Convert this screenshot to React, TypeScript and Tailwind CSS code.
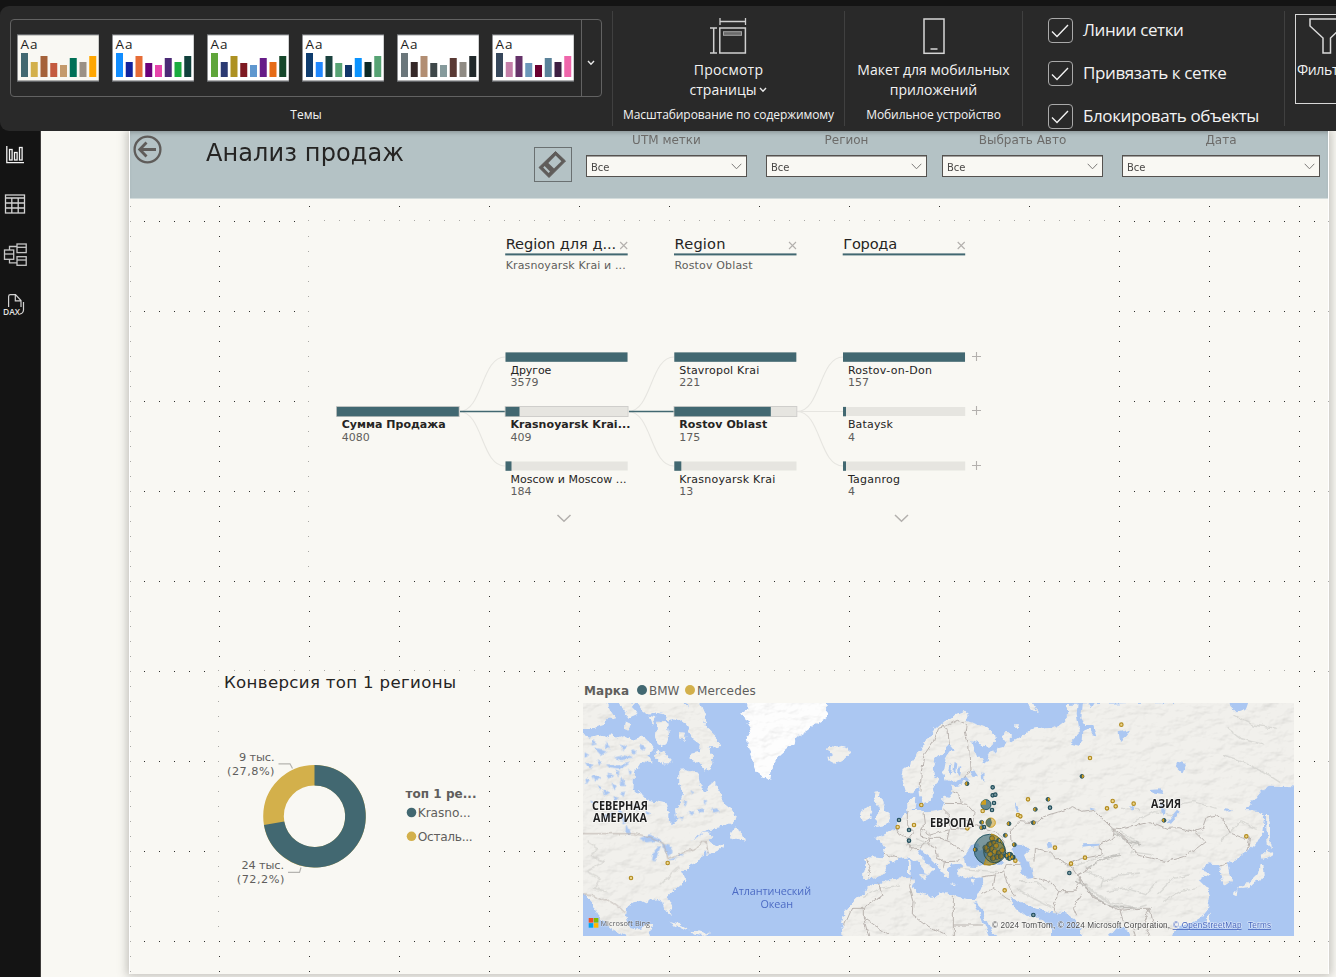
import React from "react";

const THEMES: { bg: string; bars: string[] }[] = [
  { bg: "#f9f8f3", bars: ["#426871", "#d3b04b", "#a5623a", "#c45a3f", "#c49a6c", "#007056", "#9b9186", "#ffa600"] },
  { bg: "#ffffff", bars: ["#118dff", "#12239e", "#e66c37", "#6b007b", "#e645ab", "#4b2a76", "#1aab40", "#11413c"] },
  { bg: "#ffffff", bars: ["#5fa53a", "#2b3a73", "#ad9122", "#7e1a22", "#5f97cf", "#661c88", "#e66c17", "#15472a"] },
  { bg: "#ffffff", bars: ["#0f3c6e", "#1f87ff", "#1a423e", "#57a374", "#103569", "#0a93ff", "#0b2926", "#57a374"] },
  { bg: "#ffffff", bars: ["#6b777b", "#352929", "#b28e73", "#3f484a", "#859a9c", "#593934", "#8f8b84", "#20282a"] },
  { bg: "#ffffff", bars: ["#36475b", "#c47fa9", "#653269", "#6b97ba", "#6b0030", "#5a829a", "#3d1f42", "#ef66ab"] },
];
const BAR_H = [24, 15, 21, 14, 12, 19, 15, 21];

function ThemeThumb({ t }: { t: (typeof THEMES)[number] }) {
  return (
    <svg width="82" height="48" viewBox="0 0 82 48">
      <rect x="0" y="0" width="82" height="48" fill="#626467" />
      <rect x="0.7" y="1.3" width="81" height="45.2" fill={t.bg} />
      <text x="3.5" y="15" fontSize="13.5" fill="#1d1d1d" fontFamily="Open Sans, sans-serif" textLength="17">Aa</text>
      {t.bars.map((c, i) => (
        <rect key={i} x={4 + i * 9.75} y={43 - BAR_H[i]} width="7" height={BAR_H[i]} fill={c} />
      ))}
    </svg>
  );
}

const RIBBON = "font-['Open_Sans','Noto_Sans',sans-serif]";

function Check({ label }: { label: string }) {
  return (
    <div className="flex h-[25px] items-center gap-[10px]">
      <svg width="25" height="25" viewBox="0 0 25 25" fill="none">
        <rect x="0.5" y="0.5" width="24" height="24" rx="3.5" stroke="#a9a9a9" />
        <path d="M4 13.5 L9 18.5 L20 7" stroke="#f1f1f1" strokeWidth="1.4" />
      </svg>
      <span className="mb-[2px] whitespace-nowrap text-[17px] leading-[23px] tracking-[-0.4px]">{label}</span>
    </div>
  );
}

function Ribbon() {
  return (
    <header className={`flex h-[125px] shrink-0 overflow-hidden rounded-l-[9px] bg-[#292929] text-[#f3f3f3] ${RIBBON}`}>
      <div className="flex w-[612px] shrink-0 flex-col items-center pt-[13px]">
        <div className="flex h-[78px] w-[592px] rounded-[4px] border border-[#626262]">
          <div className="flex flex-1 gap-[13px] pl-[6px] pt-[14px]">
            {THEMES.map((t, i) => (
              <ThemeThumb key={i} t={t} />
            ))}
          </div>
          <div className="flex w-[20px] items-center justify-center border-l border-[#626262] pr-px pt-[10px]">
            <svg width="8" height="6" viewBox="0 0 8 6" fill="none">
              <path d="M1 1 L4 4.2 L7 1" stroke="#e8e8e8" strokeWidth="1.4" />
            </svg>
          </div>
        </div>
        <span className="mt-[10px] text-[12px] leading-[16px]">Темы</span>
      </div>

      <div className="my-[5px] flex w-[232px] shrink-0 flex-col items-center border-l border-[#404040] pt-[7px]">
        <svg width="37" height="37" viewBox="0 0 37 37" fill="none" stroke="#d0d0d0">
          <path d="M10 0 V7 M35.5 0 V7 M10 3.5 H35.5" strokeWidth="1.3" />
          <path d="M0 10 H7 M0 35 H7 M3.7 10 V35" strokeWidth="1.5" />
          <rect x="9.8" y="10" width="25.6" height="25" strokeWidth="1.5" />
          <rect x="13.5" y="13.7" width="18" height="3.6" stroke="#a4a4a4" fill="#6a6a6a" />
        </svg>
        <div className="mt-[5px] text-center text-[14px] leading-[20px]">
          <div className="tracking-[0.2px]">Просмотр</div>
          <div className="flex items-center gap-[3px]">
            страницы
            <svg width="8" height="6" viewBox="0 0 8 6" fill="none">
              <path d="M1 1 L4 4.2 L7 1" stroke="#e8e8e8" strokeWidth="1.4" />
            </svg>
          </div>
        </div>
        <span className="mt-[7px] whitespace-nowrap text-[12px] leading-[16px] tracking-[-0.07px]">Масштабирование по содержимому</span>
      </div>

      <div className="my-[5px] flex w-[178px] shrink-0 flex-col items-center border-l border-[#404040] pt-[7px]">
        <svg width="22" height="37" viewBox="0 0 22 37" fill="none" stroke="#d6d6d6" strokeWidth="1.5">
          <rect x="1" y="1" width="20" height="34.3" />
          <path d="M7.5 31 H14.5" />
        </svg>
        <div className="mt-[5px] whitespace-nowrap text-center text-[14px] leading-[20px]">
          Макет для мобильных
          <br />
          приложений
        </div>
        <span className="mt-[7px] whitespace-nowrap text-[12px] leading-[16px] tracking-[-0.1px]">Мобильное устройство</span>
      </div>

      <div className="my-[5px] flex w-[262px] shrink-0 flex-col gap-[18px] border-l border-[#404040] pl-[25px] pt-[7px]">
        <Check label="Линии сетки" />
        <Check label="Привязать к сетке" />
        <Check label="Блокировать объекты" />
      </div>

      <div className="my-[5px] flex w-[52px] shrink-0 overflow-hidden border-l border-[#404040] pl-[10px] pt-[3px]">
        <div className="h-[90px] w-[70px] shrink-0 border border-[#d8d8d8] pl-px">
          <svg className="ml-[12px] mt-[3px]" width="36" height="36" viewBox="0 0 36 36" fill="none" stroke="#dadada" strokeWidth="1.5">
            <path d="M1 1 H34 V8 L21.5 20 V35 H14 V20 L1 8 Z" />
          </svg>
          <div className="mt-[8px] whitespace-nowrap text-[14px] leading-[16px] tracking-[-0.35px]">Фильтры</div>
        </div>
      </div>
    </header>
  );
}

function Sidebar() {
  return (
    <nav className="flex w-[41px] shrink-0 flex-col gap-[22px] border-r border-[#3f3d3b] bg-[#141414] pl-[2px] pt-[10px]">
      <svg width="28" height="28" viewBox="3 141 28 28" fill="none" stroke="#f4f4f4" strokeWidth="1.3">
        <path d="M7.8 146 V162.6 H25" />
        <rect x="10.5" y="149.5" width="2.6" height="10.5" />
        <rect x="15.5" y="152.5" width="2.6" height="7.5" />
        <rect x="20.5" y="147.5" width="2.6" height="12.5" />
      </svg>
      <svg width="28" height="28" viewBox="3 191 28 28" fill="none" stroke="#d2d2d2" strokeWidth="1.3">
        <rect x="6.5" y="195" width="19" height="18" />
        <path d="M6.5 198 H25.5 M6.5 203 H25.5 M6.5 208 H25.5 M12.8 198 V213 M19.2 198 V213" />
      </svg>
      <svg width="28" height="28" viewBox="3 241 28 28" fill="none" stroke="#c6c6c6" strokeWidth="1.3">
        <rect x="5.5" y="250" width="9.2" height="9.3" />
        <path d="M5.5 254 H14.7" />
        <rect x="18" y="244" width="9.2" height="8.6" />
        <path d="M18 247.3 H27.2" />
        <rect x="18" y="256.7" width="9.2" height="8.6" />
        <path d="M18 260 H27.2" />
        <path d="M10.5 250 V246.5 H18 M10.5 259.3 V262.8 H18" />
      </svg>
      <svg width="28" height="28" viewBox="3 291 28 28" fill="none" stroke="#d2d2d2" strokeWidth="1.2">
        <path d="M9.6 307 V296.5 Q9.6 294.7 11.4 294.7 H16.5 L22 300.5 V307 M16.3 295 V300.8 H22 M24.5 302 V310 Q24.2 313.5 21 314" />
        <text x="4" y="314.5" fontSize="8.5" stroke="none" fill="#e2e2e2" fontWeight="600" fontFamily="Open Sans, sans-serif" textLength="17" lengthAdjust="spacingAndGlyphs">DAX</text>
      </svg>
    </nav>
  );
}

const VISUALS = [
  { x1: 309, y1: 221, x2: 1119, y2: 581 },
  { x1: 219, y1: 671, x2: 489, y2: 941 },
  { x1: 579, y1: 671, x2: 1299, y2: 941 },
];

function GridDots() {
  const dots: React.ReactNode[] = [];
  for (let y = 206; y < 974; y += 15) {
    for (let x = 129; x <= 1329; x += 15) {
      if ((x - 129) % 90 !== 0 && (y - 221) % 90 !== 0) continue;
      if (VISUALS.some((v) => x > v.x1 && x < v.x2 && y > v.y1 && y < v.y2)) continue;
      const left = VISUALS.some((v) => x === v.x1 && y >= v.y1 && y < v.y2);
      const top = VISUALS.some((v) => y === v.y1 && x >= v.x1 && x < v.x2);
      const side = x === 129 || x === 1329;
      dots.push(
        <rect
          key={`${x}-${y}`}
          x={x === 129 ? 130 : x === 1329 ? 1328 : left ? x - 1 : x}
          y={top ? y - 1 : y}
          width="1"
          height="1"
          fill={left || top || side ? "#aaa9a5" : "#2e2e2c"}
        />
      );
    }
  }
  return (
    <svg className="absolute -left-px top-0" width="1200" height="843" viewBox="129 131 1200 843" shapeRendering="crispEdges">
      {dots}
    </svg>
  );
}

function Slicer({ label, box }: { label: string; box: string }) {
  return (
    <div className={`flex shrink-0 flex-col items-center pt-px ${box}`}>
      <div className="whitespace-nowrap text-[12px] leading-[16px] text-[#6c6b69]">{label}</div>
      <div className="mt-[7px] flex h-[22px] w-full items-center justify-between border border-[#55524f] bg-[#f9f8f3] pl-[4px] pr-[4px] shadow-[inset_0_1px_0_#a3a19e]">
        <span className="pt-[3px] text-[10px] leading-[14px] tracking-[-0.1px] text-[#4a4846]">Все</span>
        <svg width="11" height="7" viewBox="0 0 11 7" fill="none">
          <path d="M0.7 0.8 L5.5 5.8 L10.3 0.8" stroke="#7d7b78" strokeWidth="1" />
        </svg>
      </div>
    </div>
  );
}

function PageHeader() {
  return (
    <div className="relative ml-px flex h-[68px] w-[1198px] border-b border-[#d3dcdc] bg-[#b4c2c5] shadow-[inset_0_4px_5px_-3px_rgba(0,0,0,0.28)]">
      <svg className="ml-[3px] mt-[4px] shrink-0" width="29" height="29" viewBox="0 0 29 29" fill="none" stroke="#5f5c5a">
        <circle cx="14.5" cy="14.5" r="12.9" strokeWidth="2.3" />
        <path d="M23 14.5 H7 M13.5 7.5 L6.7 14.5 L13.5 21.5" strokeWidth="2.8" />
      </svg>
      <h1 className="ml-[44px] mt-[7px] w-[328px] shrink-0 whitespace-nowrap text-[24px] leading-[30px] tracking-[0.1px] text-[#252423]">Анализ продаж</h1>
      <div className="mt-[16px] flex h-[35px] w-[38px] shrink-0 items-center justify-center border border-[#6a7071]">
        <svg className="-mt-px mr-[3px]" width="30" height="30" viewBox="0 0 30 30">
          <path d="M18.5 2.5 L28.5 12 L12 28.5 L2 18.5 Z" fill="#5f5c5a" stroke="#5f5c5a" strokeWidth="1" strokeLinejoin="round" />
          <path d="M18.6 6.6 L24.4 12.2 L17 19.6 L11.3 13.9 Z" fill="#b4c2c5" />
          <path d="M7.6 16.9 L13 22.4 L11.6 24 L6.2 18.5 Z" fill="#b4c2c5" />
        </svg>
      </div>
      <Slicer label="UTM метки" box="ml-[14px] w-[161px]" />
      <Slicer label="Регион" box="ml-[19px] w-[161px]" />
      <Slicer label="Выбрать Авто" box="ml-[15px] w-[161px]" />
      <Slicer label="Дата" box="ml-[19px] w-[198px]" />
    </div>
  );
}

type TreeNode = { x: number; y: number; name: string; w: number; v: string; fill: number; bold?: boolean; vw: number };
const NODES: TreeNode[] = [
  { x: 337, y: 411.5, name: "Сумма Продажа", w: 104, v: "4080", vw: 28, fill: 122, bold: true },
  { x: 505.7, y: 357, name: "Другое", w: 41, v: "3579", vw: 28, fill: 122 },
  { x: 505.7, y: 411.5, name: "Krasnoyarsk Krai...", w: 120, v: "409", vw: 21, fill: 14, bold: true },
  { x: 505.7, y: 466, name: "Moscow и Moscow ...", w: 116, v: "184", vw: 21, fill: 6 },
  { x: 674.5, y: 357, name: "Stavropol Krai", w: 80, v: "221", vw: 21, fill: 122 },
  { x: 674.5, y: 411.5, name: "Rostov Oblast", w: 88, v: "175", vw: 21, fill: 96.5, bold: true },
  { x: 674.5, y: 466, name: "Krasnoyarsk Krai", w: 96, v: "13", vw: 14, fill: 7 },
  { x: 843.2, y: 357, name: "Rostov-on-Don", w: 84, v: "157", vw: 21, fill: 122 },
  { x: 843.2, y: 411.5, name: "Bataysk", w: 45, v: "4", vw: 7, fill: 3 },
  { x: 843.2, y: 466, name: "Taganrog", w: 52, v: "4", vw: 7, fill: 3 },
];

function DecompositionTree() {
  const heads = [
    { x: 505.7, t: "Region для д...", w: 110.5, s: "Krasnoyarsk Krai и ...", sw: 120 },
    { x: 674.5, t: "Region", w: 51, s: "Rostov Oblast", sw: 78 },
    { x: 843.2, t: "Города", w: 54, s: "", sw: 0 },
  ];
  return (
    <svg className="ml-[180px] mt-[23px] block" width="810" height="359" viewBox="309 222 810 359" fontFamily="DejaVu Sans, Verdana, sans-serif">
      {heads.map((h) => (
        <g key={h.x}>
          <text x={h.x} y="249" fontSize="14.6" fill="#252423" textLength={h.w}>{h.t}</text>
          <path d={`M${h.x + 114.5} 242 l7 7 m0 -7 l-7 7`} stroke="#b3b0ad" strokeWidth="1.1" />
          <rect x={h.x - 0.5} y="253.4" width="122.5" height="2" fill="#426871" />
          {h.s && (
            <text x={h.x} y="269" fontSize="11" fill="#605e5c" textLength={h.sw}>{h.s}</text>
          )}
        </g>
      ))}
      <g fill="none" stroke="#e6e5e0" strokeWidth="1.1">
        {[459, 628, 797].map((x) => (
          <g key={x}>
            <path d={`M${x} 411.5 C${x + 24} 411.5 ${x + 22} 357 ${x + 46} 357`} />
            <path d={`M${x} 411.5 C${x + 24} 411.5 ${x + 22} 466 ${x + 46} 466`} />
            <path d={`M${x} 411.5 H${x + 46}`} />
          </g>
        ))}
      </g>
      <path d="M460 411.5 H506 M629 411.5 H675" stroke="#426871" strokeWidth="1.4" />
      {NODES.map((n, i) => (
        <g key={i}>
          <rect x={n.x} y={n.y - 4.5} width="122" height="9" fill="#e6e5e0" />
          {n.bold && <rect x={n.x - 0.5} y={n.y - 5} width="122.8" height="10" fill="none" stroke="#cfcecb" />}
          <rect x={n.x - 0.2} y={n.y - 4.6} width={n.fill} height="9.4" fill="#426871" />
          <text x={n.x + 4.7} y={n.y + 16.7} fontSize="11" fontWeight={n.bold ? 700 : 400} fill="#252423" textLength={n.w}>{n.name}</text>
          <text x={n.x + 4.7} y={n.y + 29.2} fontSize="11" fill="#605e5c" textLength={n.vw}>{n.v}</text>
        </g>
      ))}
      {[356.5, 410.5, 465.5].map((y) => (
        <path key={y} d={`M972 ${y} h9 m-4.5 -4.5 v9`} stroke="#b3b0ad" strokeWidth="1.1" />
      ))}
      <path d="M557.5 515 L564 521.3 L570.5 515 M895 515 L901.5 521.3 L908 515" fill="none" stroke="#b3b0ad" strokeWidth="1.5" />
    </svg>
  );
}

function DonutVisual() {
  return (
    <section className="w-[270px] shrink-0">
      <svg className="block" width="270" height="270" viewBox="219 671 270 270" fontFamily="DejaVu Sans, Verdana, sans-serif">
        <text x="224" y="687.5" fontSize="16.6" fill="#252423" textLength="232">Конверсия топ 1 регионы</text>
        <circle cx="314.5" cy="816.2" r="41" fill="none" stroke="#d3b04b" strokeWidth="20.6" />
        <path d="M314.5 775.2 A41 41 0 1 1 274.1 823.3" fill="none" stroke="#426871" strokeWidth="20.6" />
        <path d="M278.5 763.8 H290 L292.5 768.5 M288 872.4 H299.5 L301 867.5" fill="none" stroke="#b5b4b0" strokeWidth="1.2" />
        <g fontSize="11.3" fill="#605e5c" textAnchor="end">
          <text x="274.5" y="761" textLength="35.5">9 тыс.</text>
          <text x="274.5" y="775" textLength="47.5">(27,8%)</text>
          <text x="284" y="869" textLength="42.5">24 тыс.</text>
          <text x="284.3" y="883" textLength="47.5">(72,2%)</text>
        </g>
        <text x="405.5" y="797.8" fontSize="12" fontWeight="700" fill="#605e5c" textLength="71">топ 1 ре...</text>
        <circle cx="411.5" cy="812.5" r="4.8" fill="#426871" />
        <text x="417.7" y="817" fontSize="12.2" fill="#605e5c" textLength="53">Krasno...</text>
        <circle cx="411.5" cy="836.3" r="4.8" fill="#d3b04b" />
        <text x="417.7" y="841" fontSize="12.2" fill="#605e5c" textLength="55">Осталь...</text>
      </svg>
    </section>
  );
}

/* Map geometry is kept in units of one third of a pixel. */
const AMERICA =
  "M20 176 L60 185 L85 178 L110 190 L125 172 L140 188 L165 180 L185 195 L215 185 L235 195 L250 215 L235 245 L245 262 L218 258 L205 280 L192 290 L190 340 L210 360 L240 375 L285 385 L296 410 L293 435 L308 450 L320 435 L315 405 L332 388 L340 365 L325 330 L325 285 L350 283 L385 295 L390 330 L410 350 L422 330 L435 320 L440 345 L452 355 L455 375 L480 395 L500 428 L490 445 L460 455 L415 462 L385 480 L366 502 L398 476 L418 474 L430 482 L418 496 L438 514 L465 504 L460 518 L436 530 L414 536 L404 528 L402 545 L385 552 L380 562 L362 570 L345 582 L340 597 L346 612 L330 630 L304 650 L292 668 L303 696 L306 715 L298 716 L285 700 L280 677 L262 672 L245 675 L230 685 L215 677 L190 682 L176 692 L167 702 L165 725 L170 745 L182 760 L200 764 L215 760 L222 746 L250 748 L242 775 L247 790 L180 790 L150 776 L120 757 L100 735 L85 718 L66 685 L52 668 L39 660 L20 640 Z";
const ARCTIC =
  "M20 78 L108 78 L122 108 L140 135 L118 130 L95 150 L70 162 L20 162 Z M150 78 L198 84 L186 98 L200 118 L176 128 L160 108 Z M165 140 L182 148 L176 164 L162 158 Z M200 78 L330 78 L365 105 L395 140 L415 165 L440 190 L456 208 L436 222 L412 212 L428 240 L430 265 L405 290 L385 265 L358 250 L364 236 L385 230 L390 206 L364 186 L350 150 L322 128 L296 140 L280 118 L250 112 L222 112 Z M262 140 L292 142 L297 180 L285 208 L270 214 L258 190 Z M256 226 L292 240 L302 262 L270 262 L252 244 Z M330 174 L348 176 L344 194 L330 190 Z M246 150 L236 120 L262 124 Z M345 78 L385 78 L402 118 L412 150 L386 132 L362 104 Z M20 210 L60 200 L50 220 Z M480 490 L484 470 L492 458 L503 460 L508 472 L520 482 L525 498 L512 492 L498 494 Z M396 470 L424 470 L410 478 Z M298 738 L325 745 L362 766 L346 763 L320 750 Z M362 772 L385 766 L420 775 L395 782 L368 778 Z";
const GREENLAND =
  "M526 78 L764 78 L772 100 L766 130 L740 145 L712 166 L685 182 L672 204 L650 222 L632 238 L615 258 L604 290 L600 320 L580 306 L560 292 L549 265 L546 240 L535 212 L530 190 L546 160 L526 130 L514 112 L536 100 Z";
const EUROPE =
  "M248 222 L275 200 L300 170 L322 135 L345 105 L372 80 L400 64 L432 50 L446 62 L440 78 L470 88 L502 100 L525 120 L528 145 L508 155 L478 150 L456 138 L462 160 L470 183 L486 190 L492 206 L502 198 L498 178 L514 168 L526 176 L534 160 L552 156 L560 140 L548 125 L554 110 L572 118 L572 142 L600 125 L625 106 L650 100 L690 95 L720 88 L742 60 L740 30 L1440 10 L1440 275 L1382 272 L1350 272 L1325 285 L1308 305 L1290 330 L1278 345 L1322 348 L1332 372 L1326 410 L1305 450 L1280 470 L1250 490 L1224 504 L1230 530 L1236 558 L1216 572 L1206 545 L1200 516 L1182 510 L1164 508 L1142 524 L1158 528 L1172 534 L1152 548 L1136 552 L1156 572 L1170 600 L1164 640 L1140 670 L1110 688 L1076 696 L1060 712 L1050 740 L935 740 L920 700 L895 694 L870 722 L860 740 L795 740 L782 700 L762 672 L738 655 L690 650 L655 642 L600 622 L576 608 L572 622 L596 648 L618 664 L650 660 L690 700 L690 740 L540 740 L520 715 L495 668 L474 618 L462 620 L485 680 L512 740 L70 740 L64 690 L74 655 L96 625 L125 600 L145 578 L158 568 L176 566 L215 553 L250 550 L276 548 L282 562 L274 580 L300 594 L320 600 L346 612 L356 596 L380 592 L402 602 L440 612 L468 612 L480 588 L490 562 L488 546 L464 550 L436 550 L416 540 L412 524 L428 514 L420 506 L396 508 L384 518 L384 545 L372 546 L358 518 L340 498 L318 480 L300 462 L290 468 L308 492 L344 522 L332 530 L325 548 L308 520 L288 498 L266 484 L240 488 L215 500 L196 524 L176 546 L156 552 L128 548 L136 520 L130 486 L186 490 L194 472 L190 445 L162 432 L190 420 L206 412 L224 400 L236 380 L250 366 L262 352 L262 325 L272 310 L286 304 L284 325 L278 345 L296 345 L312 352 L340 350 L362 345 L370 325 L370 302 L386 306 L398 290 L394 272 L420 268 L446 260 L436 248 L400 260 L378 252 L370 232 L372 205 L384 182 L398 164 L386 150 L370 172 L346 194 L338 214 L342 236 L354 252 L344 276 L335 300 L332 318 L312 324 L300 300 L298 272 L275 292 L254 290 L244 256 Z";
const ISLANDS =
  "M22 188 L38 176 L20 166 L26 154 L46 160 L66 152 L86 158 L90 176 L72 192 L46 206 L30 198 Z M164 290 L182 288 L180 305 L190 312 L184 328 L198 344 L212 370 L208 386 L184 392 L162 396 L174 380 L162 368 L178 356 L176 336 L160 312 Z M124 345 L150 334 L154 350 L148 368 L128 380 L118 368 Z M266 496 L274 494 L275 512 L267 514 Z M264 516 L276 516 L274 536 L264 534 Z M298 540 L322 542 L318 554 L300 546 Z M388 566 L410 566 L400 570 Z M450 562 L466 558 L458 568 Z M272 330 L290 328 L286 342 L276 342 Z M610 18 L640 20 L656 55 L636 44 Z M586 88 L600 88 L596 98 L586 98 Z M1338 360 L1346 360 L1350 390 L1350 425 L1356 462 L1344 450 L1340 410 Z M1322 480 L1336 470 L1342 462 L1360 478 L1344 488 L1330 494 Z M1320 510 L1330 510 L1334 535 L1322 556 L1300 566 L1280 576 L1258 580 L1248 590 L1262 572 L1290 560 L1312 540 Z M1240 586 L1252 588 L1250 602 L1240 598 Z M1164 660 L1172 656 L1168 684 L1160 680 Z";
const WATER =
  "M434 484 L452 455 L470 446 L480 450 L476 466 L492 462 L510 470 L535 482 L552 500 L540 510 L500 506 L465 516 L440 514 Z M574 462 L586 450 L612 446 L628 466 L612 480 L620 498 L630 500 L636 530 L640 546 L620 548 L604 534 L598 505 L584 486 Z M680 446 L692 442 L700 456 L684 460 Z M448 230 L462 226 L474 244 L458 246 Z M484 232 L494 236 L492 262 L486 250 Z M774 10 L790 10 L784 70 L796 90 L820 90 L832 124 L820 122 L808 100 L790 106 L788 136 L774 152 L750 146 L764 132 L776 120 L776 90 L770 60 Z M796 10 L826 14 L812 40 Z M690 10 L728 16 L736 80 L715 96 L690 78 Z M1228 10 L1292 10 L1282 40 L1250 52 L1234 36 Z M1076 200 L1098 206 L1088 232 L1070 214 Z M1074 344 L1082 350 L1050 386 L1040 384 Z M990 282 L1022 280 L1030 300 L1000 296 Z M1024 318 L1034 328 L1032 366 L1024 350 Z M786 448 L840 446 L836 452 L788 458 Z M896 112 L930 104 L918 122 L900 138 Z M928 330 L948 336 L936 350 Z M585 322 L592 330 L600 348 L592 352 L586 338 Z M810 338 L828 342 L812 346 Z M1212 342 L1240 346 L1222 352 Z M388 208 L396 212 L392 240 L384 232 Z M404 200 L412 206 L408 236 L400 226 Z M416 214 L424 218 L420 244 L414 236 Z";
const LAKES =
  "M208 490 L238 478 L268 490 L278 504 L254 498 L230 502 Z M262 514 L272 514 L262 540 L256 560 L246 556 L250 528 Z M274 506 L298 512 L308 528 L298 546 L286 530 Z M288 562 L322 544 L312 556 Z M316 540 L346 532 L338 542 Z M385 404 L402 400 L404 414 L388 414 Z M422 402 L444 400 L448 412 L430 416 Z M108 268 L146 270 L180 262 L150 284 L120 280 Z M72 218 L110 226 L92 240 Z M66 300 L96 308 L76 320 Z M130 360 L146 366 L136 380 Z M100 340 L118 352 L104 362 Z M156 300 L166 330 L152 330 Z M100 420 L132 412 L126 430 L104 430 Z M146 404 L158 404 L168 444 L158 448 Z M168 450 L182 480 L166 472 Z M326 430 L344 424 L340 436 Z M48 262 L70 266 L60 282 Z M132 248 L160 240 L190 250 L150 256 Z M70 196 L84 208 L64 212 Z M110 200 L120 222 L108 220 Z M44 232 L58 240 L44 246 Z M80 256 L98 262 L88 272 Z M112 296 L130 302 L118 312 Z M138 286 L152 292 L144 304 Z M46 310 L60 316 L50 330 Z M84 330 L96 336 L88 346 Z M122 326 L140 332 L130 346 Z M150 352 L166 350 L160 366 Z M172 280 L186 290 L176 300 Z M186 222 L204 230 L190 240 Z M212 206 L228 216 L214 228 Z M156 204 L172 216 L160 226 Z M336 380 L352 378 L346 392 Z M362 346 L376 352 L366 360 Z M400 374 L416 378 L404 386 Z M352 412 L370 408 L364 422 Z M60 376 L74 382 L66 392 Z M88 384 L102 390 L92 398 Z M196 384 L208 396 L198 404 Z M230 404 L244 412 L232 420 Z";
const BORDERS =
  "M300 290 L304 230 L312 180 L340 140 L356 100 L380 92 M388 150 L384 104 L362 90 M440 80 L436 110 L446 150 L450 225 L436 246 M380 92 L412 76 L432 84 M398 290 L420 300 L424 326 L370 325 M424 326 L440 328 L462 352 L458 390 L440 372 M370 345 L388 362 L390 400 L440 402 L470 392 L490 400 L530 410 L552 440 L548 456 M312 352 L316 386 L300 400 L330 420 L388 404 M262 352 L262 390 L280 408 L262 430 L238 420 L224 400 M192 478 L238 490 M262 430 L270 462 L300 460 L330 430 L360 430 L388 440 L432 470 M300 400 L306 424 L330 430 M330 430 L326 450 L348 460 L352 490 L376 500 L372 520 M376 500 L420 498 M388 404 L382 436 M140 490 L152 520 L144 548 M482 546 L526 540 L550 524 L556 508 M556 508 L600 508 M550 524 L560 560 L584 604 M526 540 L520 580 L484 598 M520 580 L560 610 L576 618 M176 566 L186 600 L130 640 L96 640 L74 690 M130 640 L130 666 L204 720 M276 548 L268 572 L282 620 L280 660 L320 690 L380 720 M400 602 L400 740 M400 690 L490 690 M130 666 L150 740 M576 440 L574 406 L600 380 L650 384 L670 366 L690 358 L720 350 L758 335 L788 352 L824 346 L850 374 L880 402 L900 404 L940 394 L990 380 L1040 400 L1080 398 L1120 410 L1150 400 L1162 366 L1190 360 L1214 380 L1226 412 L1272 430 L1290 426 L1280 470 M880 402 L930 446 L950 480 L1040 500 L1090 485 L1130 460 L1156 440 L1122 406 M880 402 L876 430 L840 450 L844 480 L790 490 L750 504 M645 500 L646 460 L690 470 L722 500 L760 520 L774 540 M640 546 L690 560 L716 590 L700 630 L712 656 M716 590 L760 590 L784 560 L774 540 L810 520 M774 540 L820 610 L900 646 L960 640 L990 640 L1000 690 L1060 700 M784 600 L760 640 L770 664 M900 646 L910 680 L936 690 L950 740 M990 640 L970 690 L990 720 M1222 504 L1198 510";
const RELIEF =
  "M790 560 L830 600 L880 630 L940 642 L980 630 M770 548 L820 592 L870 620 L930 634 M800 530 L850 552 L840 580 M740 516 L800 502 L850 484 M850 560 L900 540 L960 534 M860 590 L920 580 L980 600 L1010 560 M900 410 L950 440 L930 470 L1000 480 M870 400 L920 430 L960 450 M1010 600 L1060 550 L1110 540 M1030 620 L1080 590 L1130 580 M590 580 L640 610 L700 640 M600 560 L650 560 L680 580 M420 520 L480 526 L530 530 M560 475 L600 500 M1210 180 L1270 200 L1330 230 L1380 262 M1220 100 L1260 130 L1330 150 M1200 440 L1260 380 L1310 400 M1060 330 L1120 320 L1190 340 M940 380 L1000 350 L1060 360 M1240 60 L1300 90 L1370 100 M130 608 L180 580 L240 570 M290 430 L320 446 L260 452 M900 340 L960 344";
const HIMALAYA = "M766 556 L800 580 L824 608 L862 628 L900 638 L950 636 M800 520 L850 492 L900 480 M880 412 L920 438 L960 446";

const TEAL = "#2c5c68";
const GOLD = "#cf9f1f";
const GOLD_PTS = [
  [304, 330], [282, 390], [233, 396], [442, 400], [488, 348], [624, 313], [594, 360], [601, 364], [705, 458], [554, 586], [586, 497],
  [904, 89], [810, 189], [878, 318], [861, 340], [887, 334], [941, 326], [1279, 424], [753, 506], [795, 488],
  [-567, 549], [-457, 504],
];
const TEAL_PTS = [
  [237, 375], [267, 405], [267, 437], [518, 277], [518, 301], [526, 299], [522, 324], [516, 345], [690, 338], [640, 660], [748, 534], [492, 396], [580, 487],
];
const MIX_PTS = [
  [441, 266], [684, 313], [646, 343], [640, 383], [567, 386], [556, 421], [583, 449], [485, 382], [485, 398], [786, 244], [1032, 376], [536, 436],
  [466, 464], [558, 482], [570, 478], [568, 490], [578, 486],
];
const CLUSTER = [
  [516, 430], [520, 444], [508, 448], [528, 452], [514, 462], [500, 466], [524, 470], [536, 474], [530, 486], [510, 478], [542, 484], [496, 458], [546, 466], [518, 490],
];

function MapVisual() {
  return (
    <svg className="block" width="711" height="233" viewBox="583 703 711 233">
      <defs>
        <filter id="coast" x="-2%" y="-2%" width="104%" height="104%" colorInterpolationFilters="sRGB">
          <feTurbulence type="fractalNoise" baseFrequency="0.13" numOctaves="4" seed="7" result="n" />
          <feDisplacementMap in="SourceGraphic" in2="n" scale="7" xChannelSelector="R" yChannelSelector="G" result="d" />
          <feTurbulence type="fractalNoise" baseFrequency="0.05 0.09" numOctaves="4" seed="3" result="h" />
          <feDiffuseLighting in="h" surfaceScale="1.6" diffuseConstant="1.06" lightingColor="#ffffff" result="l">
            <feDistantLight azimuth="225" elevation="70" />
          </feDiffuseLighting>
          <feComposite in="l" in2="d" operator="in" result="lit" />
          <feBlend in="d" in2="lit" mode="multiply" result="b" />
          <feComposite in="b" in2="d" operator="arithmetic" k1="0" k2="0.4" k3="0.6" k4="0" />
        </filter>
        <filter id="wobble">
          <feTurbulence type="fractalNoise" baseFrequency="0.12" numOctaves="3" seed="5" result="n" />
          <feDisplacementMap in="SourceGraphic" in2="n" scale="5" xChannelSelector="R" yChannelSelector="G" />
        </filter>
      </defs>
      <rect x="583" y="703" width="711" height="233" fill="#abc7f2" />
      <g filter="url(#coast)">
        <g transform="translate(570 675) scale(0.33333)">
          <path d={AMERICA} fill="#f1f0ec" />
          <path d={ARCTIC} fill="#f1f0ec" />
          <path d={GREENLAND} fill="#fdfdfd" />
        </g>
        <g transform="translate(820 695) scale(0.33333)">
          <path d={EUROPE} fill="#f1f0ec" />
          <path d={ISLANDS} fill="#f1f0ec" />
        </g>
      </g>
      <g filter="url(#wobble)">
        <g transform="translate(820 695) scale(0.33333)" fill="none">
          <path d={RELIEF} stroke="#d2d1cd" strokeWidth="4" opacity="0.75" />
          <path d={HIMALAYA} stroke="#b9b8b4" strokeWidth="4.5" opacity="0.8" />
          <path d={WATER} fill="#abc7f2" />
          <path d={BORDERS} stroke="#b9b3af" strokeWidth="3" strokeLinejoin="round" />
        </g>
        <g transform="translate(570 675) scale(0.33333)" fill="none">
          <path d={LAKES} fill="#abc7f2" />
          <path d="M20 476 L192 476 L240 486 L280 505 L294 552 L340 532 L378 520 L394 500 L408 500 L414 536 M39 660 L70 662 L100 678 L120 676 L140 690 L166 714" stroke="#b9b0ab" strokeWidth="2.8" />
          <path d="M50 500 L80 520 L60 540 L100 560 L50 590 L90 610 L70 640 L110 650 M270 630 L300 602 L330 570" stroke="#d6d5d1" strokeWidth="4" />
        </g>
      </g>
      <g transform="translate(820 695) scale(0.33333)">
        <circle cx="508" cy="464" r="46" fill={TEAL} fillOpacity="0.6" stroke={TEAL} strokeWidth="3" />
        <path d="M508 464 L514 417 A47 47 0 1 1 492 509 Z" fill={GOLD} fillOpacity="0.6" stroke="#b98c17" strokeWidth="3" />
        <circle cx="524" cy="470" r="33" fill={TEAL} fillOpacity="0.35" stroke="#33534c" strokeWidth="3" />
        {CLUSTER.map(([x, y], i) => (
          <g key={i}>
            <circle cx={x} cy={y} r="7.5" fill={i % 3 === 0 ? "#a98a26" : "#5c6238"} fillOpacity="0.8" stroke="#2d4d50" strokeWidth="2.2" />
            <path d={`M${x} ${y - 7} A7 7 0 0 1 ${x} ${y + 7} Z`} fill="#ab7f14" fillOpacity="0.75" />
          </g>
        ))}
        <circle cx="498" cy="329" r="15" fill={TEAL} fillOpacity="0.7" stroke={TEAL} strokeWidth="3" />
        <path d="M498 329 V314 A15 15 0 0 0 483 329 Z" fill={GOLD} />
        <circle cx="512" cy="383" r="14" fill={GOLD} fillOpacity="0.5" stroke={GOLD} strokeWidth="3" />
        <path d="M512 369 A14 14 0 0 0 510 397 L516 383 Z" fill={TEAL} fillOpacity="0.7" />
        <circle cx="568" cy="484" r="12" fill="#6d6a2f" fillOpacity="0.7" stroke={TEAL} strokeWidth="3" />
        {GOLD_PTS.map(([x, y], i) => (
          <circle key={i} cx={x} cy={y} r="5.2" fill="#ecd48d" stroke="#b18a1c" strokeWidth="3.4" />
        ))}
        {TEAL_PTS.map(([x, y], i) => (
          <circle key={i} cx={x} cy={y} r="5.2" fill="#7f9ca3" stroke="#1c4a58" strokeWidth="3.4" />
        ))}
        {MIX_PTS.map(([x, y], i) => (
          <g key={i}>
            <circle cx={x} cy={y} r="5.8" fill="#4a6a5e" stroke="#1f4a55" strokeWidth="2.6" />
            <path d={`M${x} ${y - 5.5} A5.5 5.5 0 0 ${i % 2} ${x} ${y + 5.5} Z`} fill="#d29a1a" />
          </g>
        ))}
      </g>
      <g fontFamily="Open Sans, Noto Sans, sans-serif" fontWeight="700" fontSize="11.5" fill="#1f1f1f" stroke="#ffffff" strokeWidth="1.6" strokeOpacity="0.65" paintOrder="stroke">
        <text x="592" y="809.5" textLength="56" lengthAdjust="spacingAndGlyphs">СЕВЕРНАЯ</text>
        <text x="593" y="821.8" textLength="54" lengthAdjust="spacingAndGlyphs">АМЕРИКА</text>
        <text x="930" y="827" textLength="44" lengthAdjust="spacingAndGlyphs">ЕВРОПА</text>
        <text x="1151" y="808" textLength="30" lengthAdjust="spacingAndGlyphs">АЗИЯ</text>
      </g>
      <g fontFamily="Open Sans, Noto Sans, sans-serif" fontSize="10.8" fill="#4c6bc4">
        <text x="732" y="895" textLength="79">Атлантический</text>
        <text x="760.5" y="908" textLength="32.5">Океан</text>
      </g>
      <g>
        <rect x="588.7" y="918" width="4.6" height="4.6" fill="#f25022" />
        <rect x="593.8" y="918" width="4.6" height="4.6" fill="#7fba00" />
        <rect x="588.7" y="923.1" width="4.6" height="4.6" fill="#00a4ef" />
        <rect x="593.8" y="923.1" width="4.6" height="4.6" fill="#ffb900" />
      </g>
      <text x="600.5" y="925.8" fontSize="8" fill="#5f6063" stroke="#ffffff" strokeWidth="0.8" strokeOpacity="0.4" paintOrder="stroke" fontFamily="Open Sans, sans-serif" textLength="49.5" lengthAdjust="spacingAndGlyphs">Microsoft Bing</text>
      <g fontFamily="Liberation Sans, Arial, sans-serif" fontSize="8.2" stroke="#ffffff" strokeWidth="1.2" strokeOpacity="0.6" paintOrder="stroke">
        <text x="992" y="928" fill="#4a4a4a" textLength="178">© 2024 TomTom, © 2024 Microsoft Corporation,</text>
        <text x="1173" y="928" fill="#4766bd" textLength="68.5">© OpenStreetMap</text>
        <text x="1248" y="928" fill="#4766bd" textLength="23">Terms</text>
      </g>
      <path d="M1173 929.5 H1241.5 M1248 929.5 H1271" stroke="#4766bd" strokeWidth="0.8" />
    </svg>
  );
}

function MapSection() {
  return (
    <section className="ml-[94px] w-[711px] shrink-0 pt-[11px]">
      <div className="flex h-[21px] items-start text-[12px] leading-[18px] text-[#605e5c]">
        <span className="ml-px w-[53px] font-bold tracking-[0.05px]">Марка</span>
        <span className="mr-[2px] mt-[3px] size-[10px] rounded-full bg-[#426871]" />
        <span className="w-[36px]">BMW</span>
        <span className="mr-[2px] mt-[3px] size-[10px] rounded-full bg-[#d3b04b]" />
        <span className="tracking-[0.15px]">Mercedes</span>
      </div>
      <MapVisual />
    </section>
  );
}

export default function App() {
  return (
    <div className="flex h-[977px] w-[1336px] flex-col overflow-hidden bg-[#141414] pt-[6px]">
      <Ribbon />
      <div className="flex min-h-0 flex-1">
        <Sidebar />
        <main className="min-w-0 flex-1 overflow-hidden bg-[#f9f8f3] pl-[88px] font-['DejaVu_Sans',Verdana,sans-serif]">
          <div className="relative h-[843px] w-[1200px] border-x border-white bg-[#f9f8f3] shadow-[0_0_9px_2px_rgba(90,85,80,0.35)]">
            <div className="-mx-px">
              <GridDots />
              <PageHeader />
              <DecompositionTree />
              <div className="ml-[90px] mt-[90px] flex">
                <DonutVisual />
                <MapSection />
              </div>
            </div>
          </div>
        </main>
      </div>
    </div>
  );
}
